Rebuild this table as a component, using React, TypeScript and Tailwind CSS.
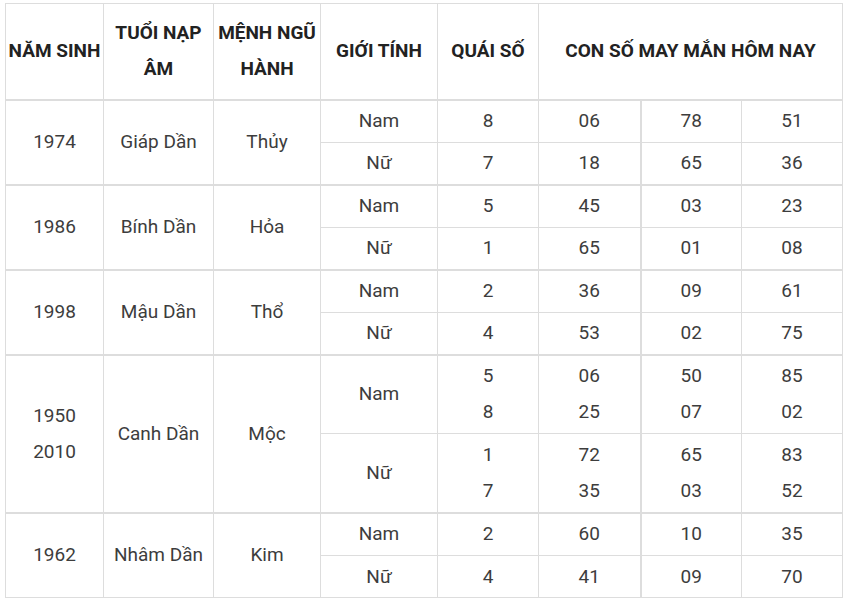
const groups = [
  {
    year: ['1974'],
    tuoi: 'Giáp Dần',
    menh: 'Thủy',
    rows: [
      { sex: 'Nam', quai: ['8'], nums: [['06'], ['78'], ['51']] },
      { sex: 'Nữ', quai: ['7'], nums: [['18'], ['65'], ['36']] },
    ],
  },
  {
    year: ['1986'],
    tuoi: 'Bính Dần',
    menh: 'Hỏa',
    rows: [
      { sex: 'Nam', quai: ['5'], nums: [['45'], ['03'], ['23']] },
      { sex: 'Nữ', quai: ['1'], nums: [['65'], ['01'], ['08']] },
    ],
  },
  {
    year: ['1998'],
    tuoi: 'Mậu Dần',
    menh: 'Thổ',
    rows: [
      { sex: 'Nam', quai: ['2'], nums: [['36'], ['09'], ['61']] },
      { sex: 'Nữ', quai: ['4'], nums: [['53'], ['02'], ['75']] },
    ],
  },
  {
    year: ['1950', '2010'],
    tuoi: 'Canh Dần',
    menh: 'Mộc',
    rows: [
      { sex: 'Nam', quai: ['5', '8'], nums: [['06', '25'], ['50', '07'], ['85', '02']] },
      { sex: 'Nữ', quai: ['1', '7'], nums: [['72', '35'], ['65', '03'], ['83', '52']] },
    ],
  },
  {
    year: ['1962'],
    tuoi: 'Nhâm Dần',
    menh: 'Kim',
    rows: [
      { sex: 'Nam', quai: ['2'], nums: [['60'], ['10'], ['35']] },
      { sex: 'Nữ', quai: ['4'], nums: [['41'], ['09'], ['70']] },
    ],
  },
];

function Lines({ items }: { items: string[] }) {
  return (
    <>
      {items.map((t, i) => (
        <div key={i}>{t}</div>
      ))}
    </>
  );
}

export default function App() {
  const td = 'border border-[#dddddd] p-0 text-center align-middle';
  const th = 'border border-[#dddddd] p-0 text-center align-middle font-bold text-[#222]';

  return (
    <div className="h-[604px] w-[844px] bg-white pl-[5px] pt-[3px]">
      <table
        className="w-[837px] table-fixed border-collapse text-[19px] leading-[36px] text-[#3d3d3d]"
        style={{ fontFamily: 'Roboto, "Noto Sans", sans-serif' }}
      >
        <colgroup>
          <col className="w-[98px]" />
          <col className="w-[110px]" />
          <col className="w-[107px]" />
          <col className="w-[117px]" />
          <col className="w-[101px]" />
          <col className="w-[102px]" />
          <col className="w-[101px]" />
          <col className="w-[101px]" />
        </colgroup>
        <thead>
          <tr className="h-[96px] border-b-2 border-b-[#dddddd]">
            <th className={th}>NĂM SINH</th>
            <th className={th}>
              TUỔI NẠP
              <br />
              ÂM
            </th>
            <th className={th}>
              MỆNH NGŨ
              <br />
              HÀNH
            </th>
            <th className={th}>GIỚI TÍNH</th>
            <th className={th}>QUÁI SỐ</th>
            <th className={th} colSpan={3}>
              CON SỐ MAY MẮN HÔM NAY
            </th>
          </tr>
        </thead>
        <tbody>
          {groups.map((g) =>
            g.rows.map((r, ri) => {
              const tall = r.quai.length > 1;
              const h = tall ? 'h-[79px]' : ri === 0 ? 'h-[43px]' : 'h-[42px]';
              return (
                <tr
                  key={g.tuoi + r.sex}
                  className={`${h} ${ri === 0 ? 'border-t-2 border-t-[#dddddd]' : ''}`}
                >
                  {ri === 0 && (
                    <>
                      <td className={td} rowSpan={2}>
                        <Lines items={g.year} />
                      </td>
                      <td className={td} rowSpan={2}>
                        {g.tuoi}
                      </td>
                      <td className={td} rowSpan={2}>
                        {g.menh}
                      </td>
                    </>
                  )}
                  <td className={td}>{r.sex}</td>
                  <td className={td}>
                    <Lines items={r.quai} />
                  </td>
                  {r.nums.map((n, ni) => (
                    <td
                      key={ni}
                      className={`${td} ${ni === 1 ? 'border-l-2' : ''}`}
                    >
                      <Lines items={n} />
                    </td>
                  ))}
                </tr>
              );
            })
          )}
        </tbody>
      </table>
    </div>
  );
}
